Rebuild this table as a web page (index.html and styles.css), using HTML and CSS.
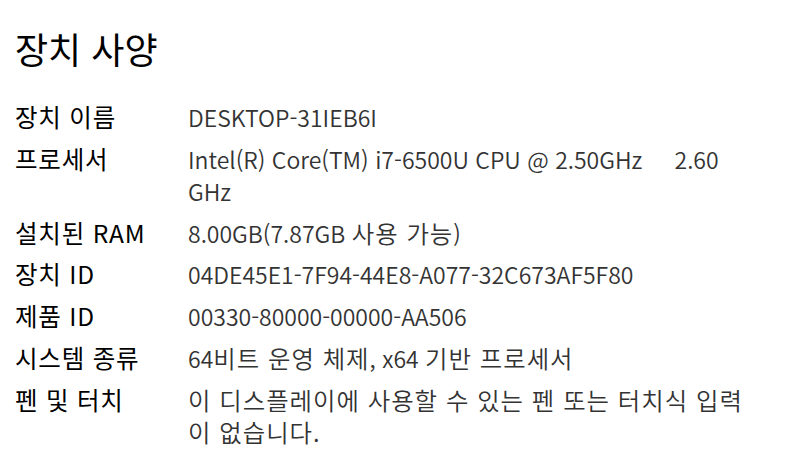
FILE: index.html
```html
<!DOCTYPE html>
<html lang="ko">
<head>
<meta charset="utf-8">
<link rel="stylesheet" href="styles.css">
</head>
<body>
<main class="page">
  <h1 class="title">장치 사양</h1>
  <dl class="specs">
    <div class="row"><dt>장치 이름</dt><dd>DESKTOP-31IEB6I</dd></div>
    <div class="row"><dt>프로세서</dt><dd>Intel(R) Core(TM) i7-6500U CPU @ 2.50GHz&nbsp;&nbsp;&nbsp;&nbsp; 2.60 GHz</dd></div>
    <div class="row"><dt>설치된 RAM</dt><dd>8.00GB(7.87GB <span class="ko">사용 가능</span>)</dd></div>
    <div class="row"><dt>장치 ID</dt><dd>04DE45E1-7F94-44E8-A077-32C673AF5F80</dd></div>
    <div class="row"><dt>제품 ID</dt><dd>00330-80000-00000-AA506</dd></div>
    <div class="row"><dt>시스템 종류</dt><dd>64<span class="ko">비트 운영 체제</span>, x64 <span class="ko">기반 프로세서</span></dd></div>
    <div class="row"><dt>펜 및 터치</dt><dd><span class="ko">이 디스플레이에 사용할 수 있는 펜 또는 터치식 입력이 없습니다.</span></dd></div>
  </dl>
</main>
</body>
</html>
```
FILE: styles.css
```css
html, body {
  margin: 0;
  padding: 0;
  background: #ffffff;
}
.page {
  padding: 24px 0 0 15px;
  font-family: "Noto Sans CJK KR", "Noto Sans", sans-serif;
  color: #000;
}
.title {
  margin: 0 0 29px 0;
  font-size: 36px;
  font-weight: 400;
  line-height: 48px;
}
.specs {
  margin: 0;
  display: flex;
  flex-direction: column;
  gap: 9.8px;
}
.row {
  display: flex;
}
.row dt {
  width: 173px;
  flex: none;
  font-size: 24.5px;
  line-height: 32px;
  letter-spacing: 0.8px;
  color: #000;
}
.row dd {
  margin: 0;
  width: 562px;
  font-size: 23px;
  font-weight: 350;
  line-height: 32px;
  color: #333;
}
.ko {
  font-size: 24.4px;
  line-height: 1;
  letter-spacing: 1px;
}
```
